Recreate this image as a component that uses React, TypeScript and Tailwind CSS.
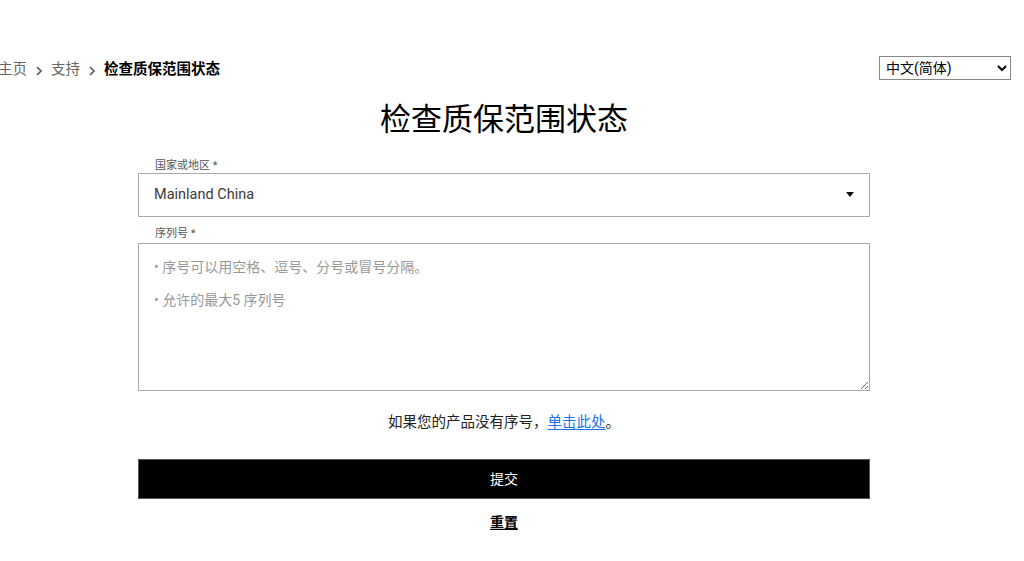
import { useState } from "react";

const Chevron = () => (
  <svg width="8" height="12" viewBox="0 0 8 12" className="mx-[8px]">
    <path d="M2 2l4 4-4 4" fill="none" stroke="#555" strokeWidth="1.6" />
  </svg>
);

const App = () => {
  const [country, setCountry] = useState("CN");
  const [serials, setSerials] = useState("");

  return (
    <div className="min-h-[561px] w-[1024px] bg-white text-[#222] font-['Roboto','Noto_Sans_CJK_SC',sans-serif]">
      <div className="flex items-center justify-between pt-[56px] pr-[13px]">
        <nav className="flex items-center text-[14.5px] leading-none ml-[-2px] mt-[5px]">
          <span className="text-[#666]">主页</span>
          <Chevron />
          <span className="text-[#666]">支持</span>
          <Chevron />
          <span className="font-bold text-black">检查质保范围状态</span>
        </nav>
        <select
          className="w-[132px] h-[24px] border border-[#888] text-[14px] px-[2px] text-black bg-white"
          defaultValue="zh"
        >
          <option value="zh">中文(简体)</option>
          <option value="en">English</option>
        </select>
      </div>

      <div className="w-[732px] ml-[138px]">
        <h1 className="text-center text-[31px] leading-[40px] mt-[20px] text-black font-normal">
          检查质保范围状态
        </h1>

        <label className="block text-[11px] text-[#555] ml-[17px] mt-[19px] leading-[14px]">
          国家或地区 *
        </label>
        <div className="relative">
          <select
            value={country}
            onChange={(e) => setCountry(e.target.value)}
            className="appearance-none w-full h-[44px] border border-[#aaa] bg-white pl-[15px] text-[14.5px] text-[#3a3a3a] outline-none"
          >
            <option value="CN">Mainland China</option>
            <option value="HK">Hong Kong</option>
            <option value="TW">Taiwan</option>
          </select>
          <svg
            width="8"
            height="5"
            viewBox="0 0 8 5"
            className="absolute right-[16px] top-[19px] pointer-events-none"
          >
            <path d="M0 0h8L4 5z" fill="#111" />
          </svg>
        </div>

        <label className="block text-[11px] text-[#555] ml-[17px] mt-[10px] leading-[14px]">
          序列号 *
        </label>
        <textarea
          value={serials}
          onChange={(e) => setSerials(e.target.value)}
          placeholder={"• 序号可以用空格、逗号、分号或冒号分隔。\n\n• 允许的最大5 序列号"}
          className="block w-full h-[148px] mt-[2px] border border-[#aaa] pt-[15px] pl-[15px] text-[14px] leading-[16.5px] placeholder:text-[#999] outline-none"
        />

        <p className="text-center text-[14.5px] mt-[22px] text-[#222] leading-[20px]">
          如果您的产品没有序号，
          <a href="#" className="text-[#1a73e8] underline underline-offset-2">
            单击此处
          </a>
          。
        </p>

        <button
          type="button"
          className="block w-full h-[40px] mt-[26px] bg-black text-white text-[14px] border border-[#555]"
        >
          提交
        </button>

        <div className="text-center mt-[11px]">
          <a href="#" className="text-[14px] font-bold underline underline-offset-2 decoration-1 text-black">
            重置
          </a>
        </div>
      </div>
    </div>
  );
};

export default App;
